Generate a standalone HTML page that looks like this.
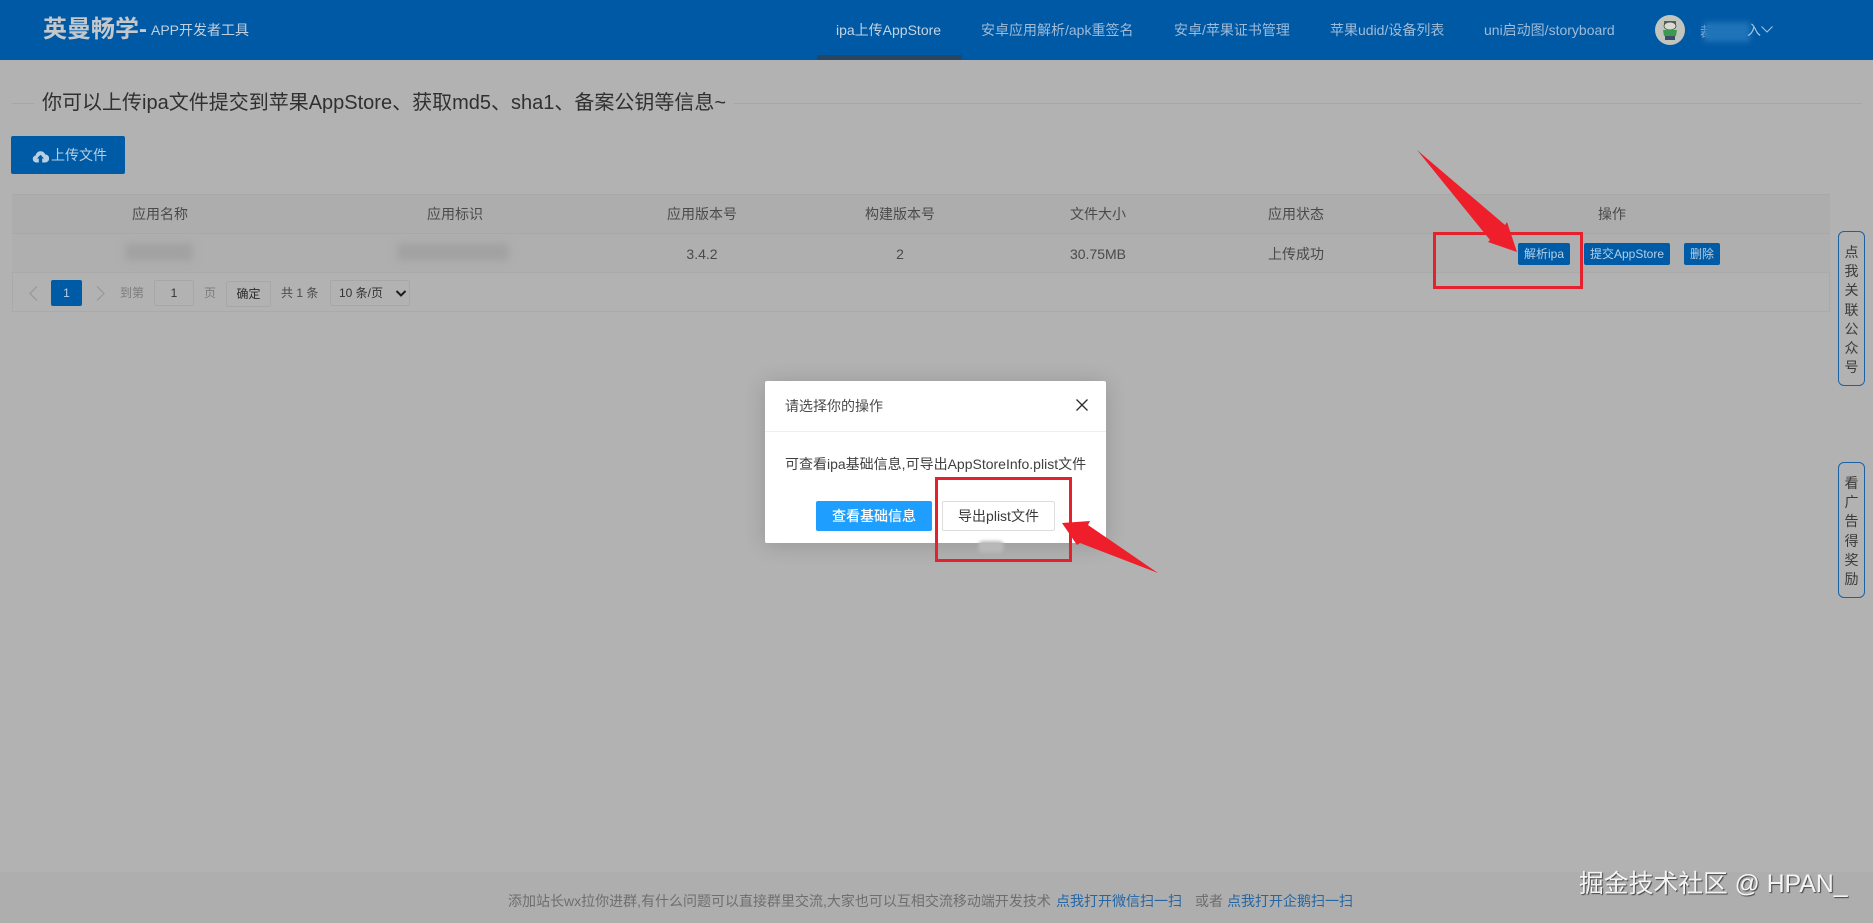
<!DOCTYPE html>
<html lang="zh"><head><meta charset="utf-8"><title>英曼畅学</title>
<style>
*{box-sizing:border-box}
html,body{margin:0;padding:0;width:1873px;height:923px;overflow:hidden}
body{position:relative;background:#b2b2b2;font-family:"Liberation Sans","Noto Sans CJK SC",sans-serif;font-size:14px;color:#474747}
.a{position:absolute;white-space:nowrap}
.c{text-align:center}
.nav{top:20px;line-height:20px;font-size:14px;color:#9fbbd8}
.th,.td{line-height:20px;font-size:14px;color:#4a4a4a;transform:translateX(-50%)}
.th{top:204px}.td{top:244px}
.op{top:243px;height:22px;line-height:22px;background:#005ba6;color:#b4cfe6;font-size:12px;text-align:center;border-radius:2px}
.side{left:1838px;width:27px;border:1px solid #1b62a3;border-radius:6px;color:#3a3a3a;font-size:14px;line-height:19.200px;text-align:center;white-space:normal;padding-top:11px;word-break:break-all}
.pg{top:283px;line-height:20px;font-size:12px}
.blur{background:#a2a2a2;filter:blur(4px)}
</style></head><body>

<div class="a" style="left:0;top:0;width:1873px;height:60px;background:#0059a4"></div>
<div class="a" style="left:43px;top:13px;font-size:24px;line-height:34px;font-weight:700;color:#c3c8cd">英曼畅学-</div>
<div class="a" style="left:151px;top:20px;font-size:14px;line-height:20px;color:#c0d0e0">APP开发者工具</div>
<div class="a nav" style="left:836px;color:#c4d3e2">ipa上传AppStore</div>
<div class="a nav" style="left:981px">安卓应用解析/apk重签名</div>
<div class="a nav" style="left:1174px">安卓/苹果证书管理</div>
<div class="a nav" style="left:1330px">苹果udid/设备列表</div>
<div class="a nav" style="left:1484px">uni启动图/storyboard</div>
<div class="a" style="left:817px;top:55px;width:145px;height:5px;background:#2a4560"></div>

<svg class="a" style="left:1655px;top:15px" width="30" height="30" viewBox="0 0 30 30">
<circle cx="15" cy="15" r="15" fill="#c2c4be"/>
<path d="M9 6h12v4H9z" fill="#4d6b52"/>
<ellipse cx="15" cy="11" rx="6" ry="4" fill="#d8dad4" stroke="#444" stroke-width=".7"/>
<path d="M8 15h14l-1 6H9z" fill="#3c9a50"/>
<path d="M10 21h10v4H10z" fill="#3a4d6a"/>
</svg>
<div class="a" style="left:1700px;top:22px;font-size:14px;line-height:20px;color:#a9c6e0">裁</div>
<div class="a" style="left:1704px;top:22px;width:46px;height:20px;background:#1f73b8;filter:blur(3px)"></div>
<div class="a" style="left:1747px;top:20px;font-size:14px;line-height:20px;color:#a9c6e0">入</div>
<svg class="a" style="left:1760px;top:25px" width="14" height="9" viewBox="0 0 14 9"><path d="M1.500 1.500 7 7l5.500-5.500" fill="none" stroke="#a9c6e0" stroke-width="1"/></svg>

<div class="a" style="left:12px;top:103px;width:1850px;height:1px;background:#a6a6a6"></div>
<div class="a" style="left:34px;top:88px;padding:0 8px;background:#b2b2b2;font-size:20px;line-height:30px;color:#303030">你可以上传ipa文件提交到苹果AppStore、获取md5、sha1、备案公钥等信息~</div>

<div class="a" style="left:11px;top:136px;width:114px;height:38px;background:#005ba6;border-radius:2px"></div>
<svg class="a" style="left:32px;top:149px" width="17" height="14" viewBox="0 0 17 14"><path d="M4 13.500A3.600 3.600 0 0 1 3.600 6.400 5 5 0 0 1 13.200 5.400 4 4 0 0 1 13 13.500H10.200V9.500H12L8.500 5.800 5 9.500H6.800V13.500Z" fill="#b9cfe2"/></svg>
<div class="a" style="left:51px;top:145px;font-size:14px;line-height:20px;color:#b9cfe2">上传文件</div>

<div class="a" style="left:12px;top:194px;width:1818px;height:118px;border:1px solid #aaaaaa"></div>
<div class="a" style="left:12px;top:194px;width:1818px;height:40px;background:#adadad;border-bottom:1px solid #a8a8a8;border-top:1px solid #a8a8a8"></div>
<div class="a" style="left:12px;top:234px;width:1818px;height:39px;background:#afafaf;border-bottom:1px solid #aaaaaa"></div>

<div class="a th" style="left:160px">应用名称</div>
<div class="a th" style="left:455px">应用标识</div>
<div class="a th" style="left:702px">应用版本号</div>
<div class="a th" style="left:900px">构建版本号</div>
<div class="a th" style="left:1098px">文件大小</div>
<div class="a th" style="left:1296px">应用状态</div>
<div class="a th" style="left:1612px">操作</div>

<div class="a blur" style="left:125px;top:243px;width:68px;height:18px"></div>
<div class="a blur" style="left:397px;top:243px;width:112px;height:18px"></div>
<div class="a td" style="left:702px">3.4.2</div>
<div class="a td" style="left:900px">2</div>
<div class="a td" style="left:1098px">30.75MB</div>
<div class="a td" style="left:1296px">上传成功</div>
<div class="a op" style="left:1518px;width:52px">解析ipa</div>
<div class="a op" style="left:1584px;width:86px">提交AppStore</div>
<div class="a op" style="left:1684px;width:36px">删除</div>

<svg class="a" style="left:26px;top:285px" width="14" height="17" viewBox="0 0 14 17"><path d="M11 1.500 4 8.500l7 7" fill="none" stroke="#979797" stroke-width="1.200"/></svg>
<div class="a c" style="left:51px;top:280px;width:31px;height:26px;line-height:26px;background:#005ba6;color:#b4cfe6;font-size:12px;border-radius:2px">1</div>
<svg class="a" style="left:94px;top:285px" width="14" height="17" viewBox="0 0 14 17"><path d="M3 1.500l7 7-7 7" fill="none" stroke="#979797" stroke-width="1.200"/></svg>
<div class="a pg" style="left:120px;color:#7c7c7c">到第</div>
<div class="a c" style="left:154px;top:280px;width:40px;height:26px;line-height:25px;border:1px solid #a7a7a7;font-size:12px;color:#333;border-radius:2px">1</div>
<div class="a pg" style="left:204px;color:#7c7c7c">页</div>
<div class="a c" style="left:226px;top:281px;width:45px;height:26px;line-height:25px;border:1px solid #a7a7a7;font-size:12px;color:#2b2b2b;border-radius:2px">确定</div>
<div class="a pg" style="left:281px;color:#4a4a4a">共 1 条</div>
<div class="a" style="left:330px;top:280px;width:80px;height:26px;line-height:25px;border:1px solid #a7a7a7;font-size:12px;color:#333;padding-left:8px;border-radius:2px">10 条/页</div>
<svg class="a" style="left:395px;top:289px" width="12" height="9" viewBox="0 0 12 9"><path d="M1.500 2 6 6.500 10.500 2" fill="none" stroke="#1d1d1d" stroke-width="2"/></svg>

<div class="a side" style="top:231px;height:155px">点我关联公众号</div>
<div class="a side" style="top:462px;height:136px">看广告得奖励</div>

<div class="a" style="left:0;top:872px;width:1873px;height:51px;background:#aeaeae"></div>
<div class="a" style="left:508px;top:891px;font-size:14px;line-height:20px;color:#6e6e6e">添加站长wx拉你进群,有什么问题可以直接群里交流,大家也可以互相交流移动端开发技术</div>
<div class="a" style="left:1056px;top:891px;font-size:14px;line-height:20px;color:#2466a3">点我打开微信扫一扫</div>
<div class="a" style="left:1195px;top:891px;font-size:14px;line-height:20px;color:#6e6e6e">或者</div>
<div class="a" style="left:1227px;top:891px;font-size:14px;line-height:20px;color:#2466a3">点我打开企鹅扫一扫</div>
<div class="a" style="left:1579px;top:867px;font-size:24.800px;line-height:36px;color:#f4f4f4;text-shadow:1px 1px 1px #444">掘金技术社区 @ HPAN_</div>

<div class="a" style="left:765px;top:381px;width:341px;height:162px;background:#fff;border-radius:2px;box-shadow:0 2px 22px rgba(0,0,0,.16)"></div>
<div class="a" style="left:765px;top:431px;width:341px;height:1px;background:#efefef"></div>
<div class="a" style="left:785px;top:396px;font-size:14px;line-height:20px;color:#4b4b4b">请选择你的操作</div>
<svg class="a" style="left:1075px;top:398px" width="14" height="14" viewBox="0 0 14 14"><path d="M1.500 1.500l11 11M12.500 1.500l-11 11" stroke="#2d2d2d" stroke-width="1.300" fill="none"/></svg>
<div class="a" style="left:785px;top:454px;font-size:14px;line-height:20px;color:#3f3f3f">可查看ipa基础信息,可导出AppStoreInfo.plist文件</div>
<div class="a c" style="left:816px;top:501px;width:116px;height:30px;line-height:30px;background:#1e9fff;color:#fff;font-size:14px;font-weight:500;border-radius:2px">查看基础信息</div>
<div class="a c" style="left:942px;top:501px;width:113px;height:30px;line-height:28px;background:#fff;border:1px solid #dedede;color:#3a3a3a;font-size:14px;border-radius:2px">导出plist文件</div>
<div class="a" style="left:978px;top:541px;width:26px;height:12px;background:#b8b8b8;border-radius:5px;filter:blur(1.500px)"></div>

<div class="a" style="left:1433px;top:232px;width:150px;height:57px;border:3px solid #e5212d"></div>
<div class="a" style="left:935px;top:477px;width:137px;height:85px;border:3px solid #e5212d"></div>
<svg class="a" style="left:0;top:0" width="1873" height="923" viewBox="0 0 1873 923">
<path d="M1417 150 1505 225 1507 222 1517 252 1488 242 1490 240Z" fill="#ee1f2b"/>
<path d="M1158 573 1088 525 1090 521 1062 523 1077 545 1080 543Z" fill="#ee1f2b"/>
</svg>
</body></html>
